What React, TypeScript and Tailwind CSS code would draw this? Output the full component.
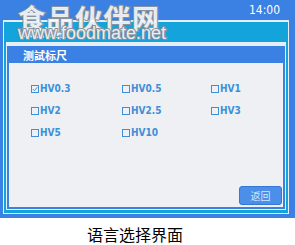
import React from 'react';

const items = [
    { label: 'HV0.3', checked: true },
    { label: 'HV0.5', checked: false },
    { label: 'HV1', checked: false },
    { label: 'HV2', checked: false },
    { label: 'HV2.5', checked: false },
    { label: 'HV3', checked: false },
    { label: 'HV5', checked: false },
    { label: 'HV10', checked: false },
];

const CheckBox: React.FC<{ checked: boolean }> = ({ checked }) => (
    <svg width="8" height="8" viewBox="0 0 8 8" className="shrink-0">
        <rect x="0.5" y="0.5" width="7" height="7" fill="none" stroke="#3d8fd8" strokeWidth="1" />
        {checked && <path d="M1.8 4.1 L3.4 5.7 L6.3 2.2" fill="none" stroke="#3d8fd8" strokeWidth="1" />}
    </svg>
);

const App: React.FC = () => {
    return (
        <div className="relative w-[295px] h-[245px] bg-white overflow-hidden font-['Noto_Sans_CJK_SC',sans-serif]">
            <div className="h-[218px] bg-[#3b80e3] flex flex-col">
                {/* status bar */}
                <div className="h-[20px] flex items-center justify-end pr-[15px] text-white text-[12px] leading-none font-['DejaVu_Sans_Condensed',sans-serif]">
                    14:00
                </div>

                {/* outer frame */}
                <div className="flex-1 ml-[3px] mr-[6px] mb-[4px] border border-t-2 border-[#e6eef8] bg-[#14a4dc] flex flex-col px-[2px] pb-[3px]">
                    <div className="h-[20px] flex items-center pl-[16px] text-white text-[11px] font-bold leading-none">
                        系统设置
                    </div>
                    <div className="flex-1 border border-t-4 border-[#e6eef8] flex flex-col">
                        <div className="flex-1 border-2 border-[#3b80e3] bg-[#eef0f3] flex flex-col">
                            <div className="h-[15px] bg-[#3b80e3] flex items-center pl-[14px] text-white text-[11px] font-bold leading-none">
                                测試标尺
                            </div>
                            <div className="flex-1 flex flex-col pt-[15px] pl-[22px] pr-[1px] pb-[2px]">
                                <div className="grid grid-cols-[91px_89px_1fr] auto-rows-[22px]">
                                    {items.map(item => (
                                        <div key={item.label} className="flex items-center gap-[1px]">
                                            <CheckBox checked={item.checked} />
                                            <span className="text-[#3d8fd8] text-[10px] font-bold leading-none font-['DejaVu_Sans_Condensed',sans-serif]">
                                                {item.label}
                                            </span>
                                        </div>
                                    ))}
                                </div>
                                <div className="mt-auto self-end">
                                    <div className="w-[43px] h-[19px] rounded-[3px] bg-[#4b8fe9] border border-[#3576d6] flex items-center justify-center text-[#d6e6f8] text-[10px] leading-none">
                                        返回
                                    </div>
                                </div>
                            </div>
                        </div>
                    </div>
                </div>
            </div>

            <div className="pl-[87px] pt-[6px] text-[16px] leading-[20px] text-black">
                语言选择界面
            </div>

            {/* watermark overlay */}
            <span className="absolute left-[18px] top-[4px] leading-none pointer-events-none text-[27px] font-bold tracking-[1.5px] text-[rgba(255,255,255,0.85)] [-webkit-text-stroke:2px_#8793a0] [paint-order:stroke_fill]">
                食品伙伴网
            </span>
            <span className="absolute left-[18px] top-[24px] leading-none pointer-events-none text-[18px] font-['Liberation_Sans',sans-serif] text-[rgba(255,255,255,0.85)] [-webkit-text-stroke:2px_#8793a0] [paint-order:stroke_fill]">
                www.foodmate.net
            </span>
        </div>
    );
};

export default App;
